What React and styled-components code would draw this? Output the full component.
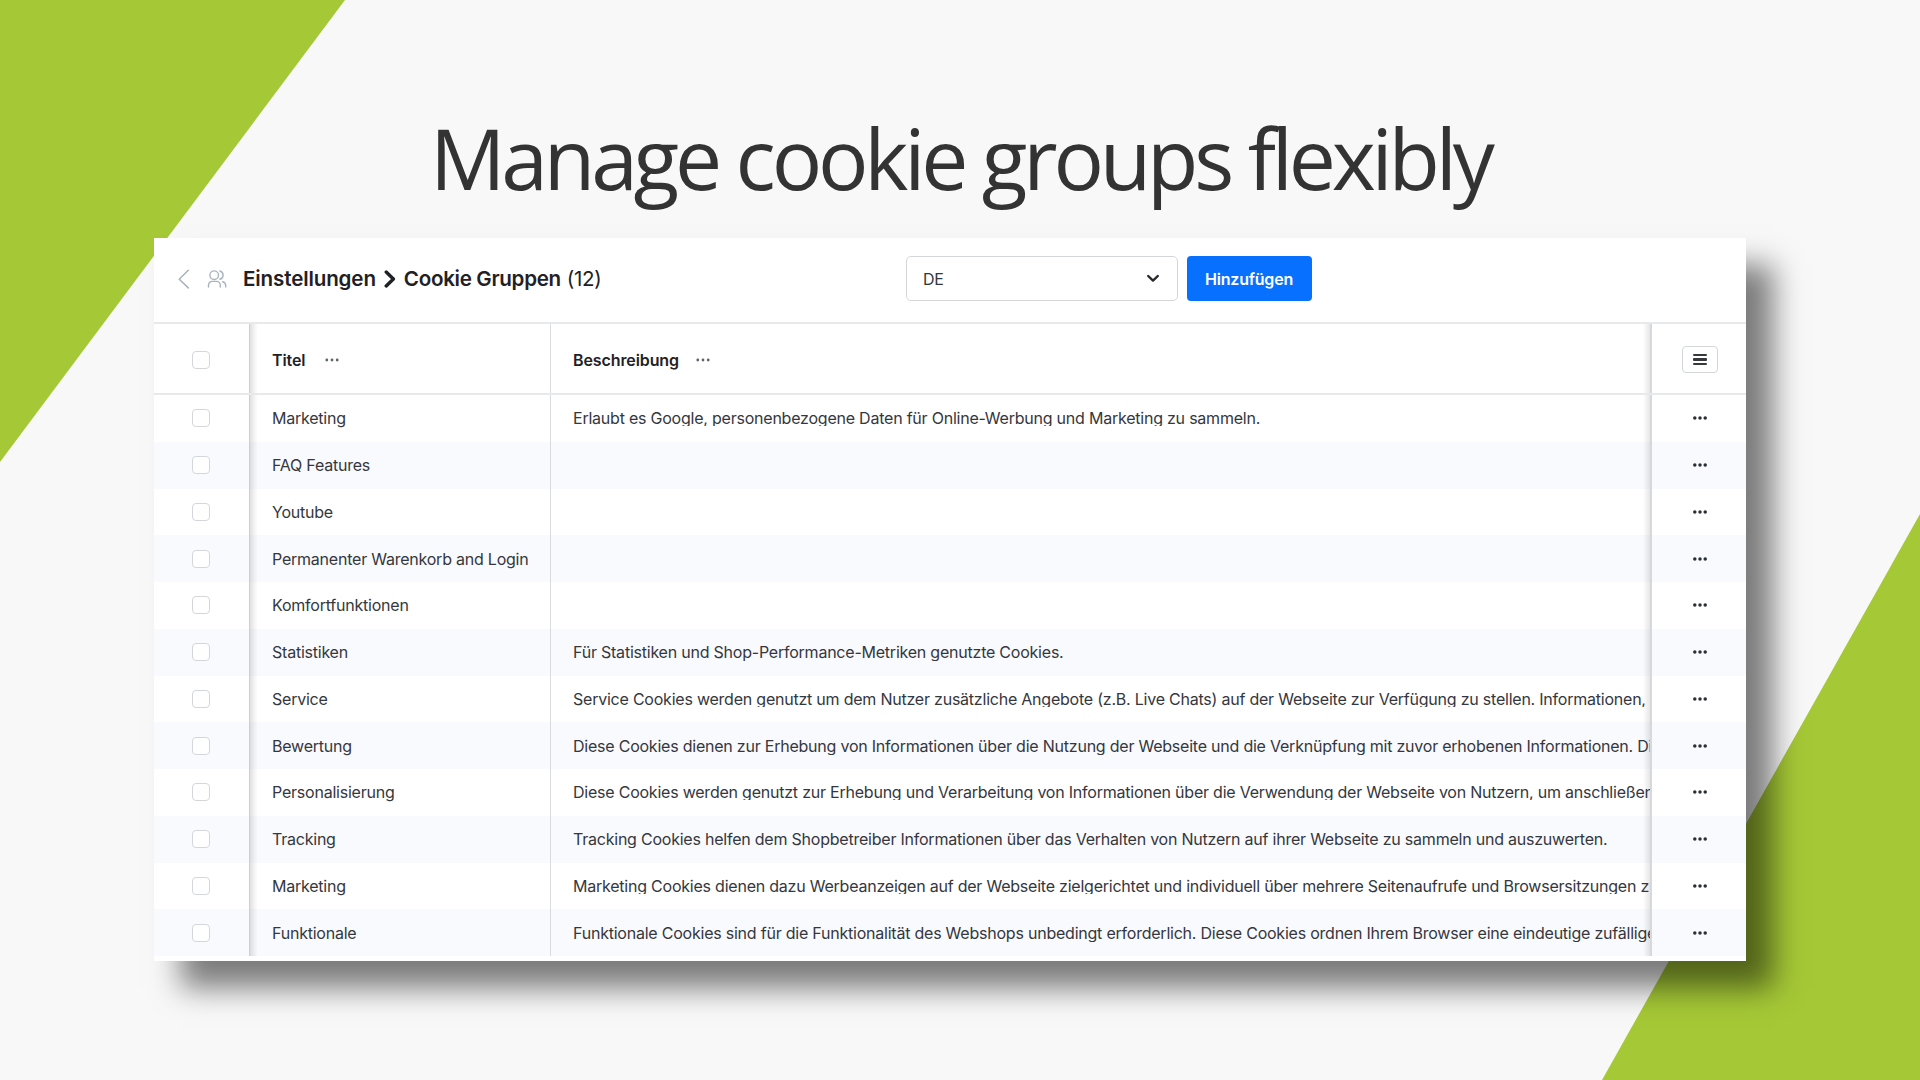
import React from 'react';
import styled, { createGlobalStyle } from 'styled-components';

const rows = [
  { title: 'Marketing', text: 'Erlaubt es Google, personenbezogene Daten für Online-Werbung und Marketing zu sammeln.' },
  { title: 'FAQ Features', text: '' },
  { title: 'Youtube', text: '' },
  { title: 'Permanenter Warenkorb and Login', text: '' },
  { title: 'Komfortfunktionen', text: '' },
  { title: 'Statistiken', text: 'Für Statistiken und Shop-Performance-Metriken genutzte Cookies.' },
  {
    title: 'Service',
    text: 'Service Cookies werden genutzt um dem Nutzer zusätzliche Angebote (z.B. Live Chats) auf der Webseite zur Verfügung zu stellen. Informationen,',
  },
  {
    title: 'Bewertung',
    text: 'Diese Cookies dienen zur Erhebung von Informationen über die Nutzung der Webseite und die Verknüpfung mit zuvor erhobenen Informationen. Die',
  },
  {
    title: 'Personalisierung',
    text: 'Diese Cookies werden genutzt zur Erhebung und Verarbeitung von Informationen über die Verwendung der Webseite von Nutzern, um anschließend',
  },
  {
    title: 'Tracking',
    text: 'Tracking Cookies helfen dem Shopbetreiber Informationen über das Verhalten von Nutzern auf ihrer Webseite zu sammeln und auszuwerten.',
  },
  {
    title: 'Marketing',
    text: 'Marketing Cookies dienen dazu Werbeanzeigen auf der Webseite zielgerichtet und individuell über mehrere Seitenaufrufe und Browsersitzungen zu',
  },
  {
    title: 'Funktionale',
    text: 'Funktionale Cookies sind für die Funktionalität des Webshops unbedingt erforderlich. Diese Cookies ordnen Ihrem Browser eine eindeutige zufällige',
  },
];

function Dots({ small }) {
  const r = small ? 1.4 : 1.75;
  return (
    <svg width="16" height="6" viewBox="0 0 16 6" fill={small ? '#5f646b' : '#2b2e33'}>
      <circle cx="2.8" cy="3" r={r} />
      <circle cx="8" cy="3" r={r} />
      <circle cx="13.2" cy="3" r={r} />
    </svg>
  );
}

function BackIcon() {
  return (
    <svg width="12" height="20" viewBox="0 0 12 20" fill="none" stroke="#a9b2bb" strokeWidth="1.5" strokeLinecap="round" strokeLinejoin="round">
      <path d="M10.3 1.3L1.2 10.2l9.1 8.7" />
    </svg>
  );
}

function UsersIcon() {
  return (
    <svg width="20" height="20" viewBox="0 0 20 20" fill="none" stroke="#a9b4be" strokeWidth="1.4" strokeLinecap="round">
      <circle cx="7.2" cy="6.2" r="4.3" />
      <path d="M1.5 18v-1.8a3.8 3.8 0 0 1 3.8-3.8h4.2a3.8 3.8 0 0 1 3.8 3.8V18" />
      <path d="M12.9 2a4.3 4.3 0 0 1 0 8.3" />
      <path d="M15.7 12.8a3.9 3.9 0 0 1 3 3.6V18" />
    </svg>
  );
}

export default function App() {
  return (
    <>
      <GlobalStyle />
      <Slide>
        <CornerTop />
        <CornerBottom />
        <Headline>Manage cookie groups flexibly</Headline>
        <Card>
          <Toolbar>
            <BackIcon />
            <UsersSlot>
              <UsersIcon />
            </UsersSlot>
            <Breadcrumb>
              <Crumb $spacing={-0.14}>Einstellungen</Crumb>
              <svg width="12" height="18" viewBox="0 0 12 18" fill="none" stroke="#1f2125" strokeWidth="3.4" strokeLinecap="round" strokeLinejoin="round">
                <path d="M2.2 2.1L9.4 9l-7.2 6.9" />
              </svg>
              <Crumb $spacing={-0.32}>Cookie Gruppen</Crumb>
              <Count>(12)</Count>
            </Breadcrumb>
            <LanguageSelect>
              DE
              <svg width="14" height="9" viewBox="0 0 14 9" fill="none" stroke="#26282c" strokeWidth="2.4" strokeLinecap="round" strokeLinejoin="round">
                <path d="M2.2 2l4.8 4.6L11.8 2" />
              </svg>
            </LanguageSelect>
            <AddButton>Hinzufügen</AddButton>
          </Toolbar>
          <HeadRow>
            <CheckCell>
              <Checkbox />
            </CheckCell>
            <TitleCell>
              <Label $width={36}>Titel</Label>
              <Dots small />
            </TitleCell>
            <TextCell>
              <Label $width={106}>Beschreibung</Label>
              <Dots small />
            </TextCell>
            <ActionCell>
              <MenuButton>
                <Bar />
                <Bar />
                <Bar />
              </MenuButton>
            </ActionCell>
          </HeadRow>
          <Body>
            {rows.map((row, i) => (
              <Row key={i} $striped={i % 2 === 1}>
                <CheckCell>
                  <Checkbox />
                </CheckCell>
                <TitleCell>{row.title}</TitleCell>
                <TextCell>
                  <Description $striped={i % 2 === 1}>{row.text}</Description>
                </TextCell>
                <ActionCell>
                  <Dots />
                </ActionCell>
              </Row>
            ))}
          </Body>
        </Card>
      </Slide>
    </>
  );
}

const GlobalStyle = createGlobalStyle`
  * {
    box-sizing: border-box;
  }

  body {
    margin: 0;
    background: #f8f8f8;
  }

  svg {
    display: block;
    flex: none;
  }
`;

const Slide = styled.main`
  position: relative;
  display: flex;
  flex-direction: column;
  width: 1920px;
  height: 1080px;
  padding-left: 154px;
  overflow: hidden;
  background: #f8f8f8;
`;

const Corner = styled.div`
  position: absolute;
  background: #a5c836;
`;

const CornerTop = styled(Corner)`
  top: 0;
  left: 0;
  width: 345px;
  height: 462px;
  clip-path: polygon(0 0, 100% 0, 0 100%);
`;

const CornerBottom = styled(Corner)`
  right: 0;
  bottom: 0;
  width: 318px;
  height: 566px;
  clip-path: polygon(100% 0, 100% 100%, 0 100%);
`;

const Headline = styled.h1`
  position: relative;
  height: 238px;
  margin: 0;
  padding: 101px 0 0 276px;
  font-family: 'Open Sans', sans-serif;
  font-size: 84px;
  font-weight: 400;
  line-height: 114px;
  letter-spacing: -4.2px;
  white-space: nowrap;
  color: #333333;
`;

const Card = styled.section`
  position: relative;
  width: 1592px;
  height: 723px;
  background: #ffffff;
  box-shadow: 27px 27px 28px rgba(0, 0, 0, 0.5);
  font-family: Inter, 'Liberation Sans', sans-serif;
  font-size: 16px;
  letter-spacing: -0.225px;
  color: #34373d;
`;

const Toolbar = styled.header`
  display: flex;
  align-items: center;
  height: 86px;
  padding: 0 0 3px 24px;
  border-bottom: 2px solid #e7e9ea;
`;

const UsersSlot = styled.div`
  margin-left: 17px;
`;

const Breadcrumb = styled.div`
  display: flex;
  align-items: center;
  gap: 8px;
  width: 663px;
  margin-left: 16px;
  font-size: 20.6px;
  white-space: nowrap;
  color: #1f2125;
`;

const Crumb = styled.span`
  font-weight: 600;
  letter-spacing: ${({ $spacing }) => $spacing}px;
`;

const Count = styled.span`
  margin-left: -2px;
  letter-spacing: -0.3px;
`;

const LanguageSelect = styled.div`
  display: flex;
  align-items: center;
  justify-content: space-between;
  width: 272px;
  height: 45px;
  padding: 0 17px 0 16px;
  border: 1px solid #d3d7db;
  border-radius: 5px;
`;

const AddButton = styled.button`
  width: 125px;
  height: 45px;
  margin-left: 8.5px;
  padding: 0;
  border: 0;
  border-radius: 4px;
  background: #0870ff;
  color: #ffffff;
  font-family: inherit;
  font-size: 16px;
  font-weight: 600;
  letter-spacing: -0.2px;
`;

const Row = styled.div`
  display: grid;
  grid-template-columns: 95px 302px 1fr 94px;
  background: ${({ $striped }) => ($striped ? '#f9fafe' : '#ffffff')};
`;

const CheckCell = styled.div`
  display: flex;
  align-items: center;
  justify-content: center;
  padding-right: 1px;
`;

const TitleCell = styled.div`
  display: flex;
  align-items: center;
  gap: 16px;
  padding-left: 22px;
  border-left: 1px solid #cdcfd2;
  border-right: 1px solid #d9dcdf;
  background: linear-gradient(to right, rgba(0, 0, 0, 0.12), rgba(0, 0, 0, 0.05) 4px, transparent 8px);
  white-space: nowrap;
`;

const TextCell = styled.div`
  display: flex;
  align-items: center;
  gap: 16px;
  min-width: 0;
  padding-left: 22px;
  border-right: 2px solid #d6d8db;
  background: linear-gradient(to left, rgba(0, 0, 0, 0.1), transparent 7px);
  overflow: hidden;
`;

const ActionCell = styled.div`
  display: flex;
  align-items: center;
  justify-content: center;
  padding-left: 2px;
`;

const HeadRow = styled(Row)`
  height: 71px;
  border-bottom: 2px solid #e7e9ea;

  ${CheckCell}, ${TitleCell}, ${TextCell}, ${ActionCell} {
    padding-top: 2px;
  }
`;

const Body = styled.div`
  display: grid;
  grid-template-rows: repeat(12, 1fr);
  height: 561px;
`;

const Label = styled.span`
  width: ${({ $width }) => $width}px;
  font-weight: 600;
  letter-spacing: -0.1px;
  color: #1f2125;
`;

/* the line box is tighter than the descenders, so they are cut off */
const Description = styled.div`
  margin-top: ${({ $striped }) => ($striped ? 1 : 0)}px;
  line-height: ${({ $striped }) => ($striped ? 17 : 16)}px;
  white-space: nowrap;
  overflow: hidden;
`;

const Checkbox = styled.span`
  width: 18px;
  height: 18px;
  border: 1px solid #d3d7db;
  border-radius: 4px;
  background: #ffffff;
`;

const MenuButton = styled.button`
  display: flex;
  flex-direction: column;
  align-items: center;
  justify-content: center;
  gap: 2px;
  width: 36px;
  height: 27px;
  margin-right: 1px;
  padding: 0;
  border: 1px solid #d3d7db;
  border-radius: 4px;
  background: #ffffff;
`;

const Bar = styled.span`
  width: 14px;
  height: 2.4px;
  border-radius: 1px;
  background: #35383d;
`;
